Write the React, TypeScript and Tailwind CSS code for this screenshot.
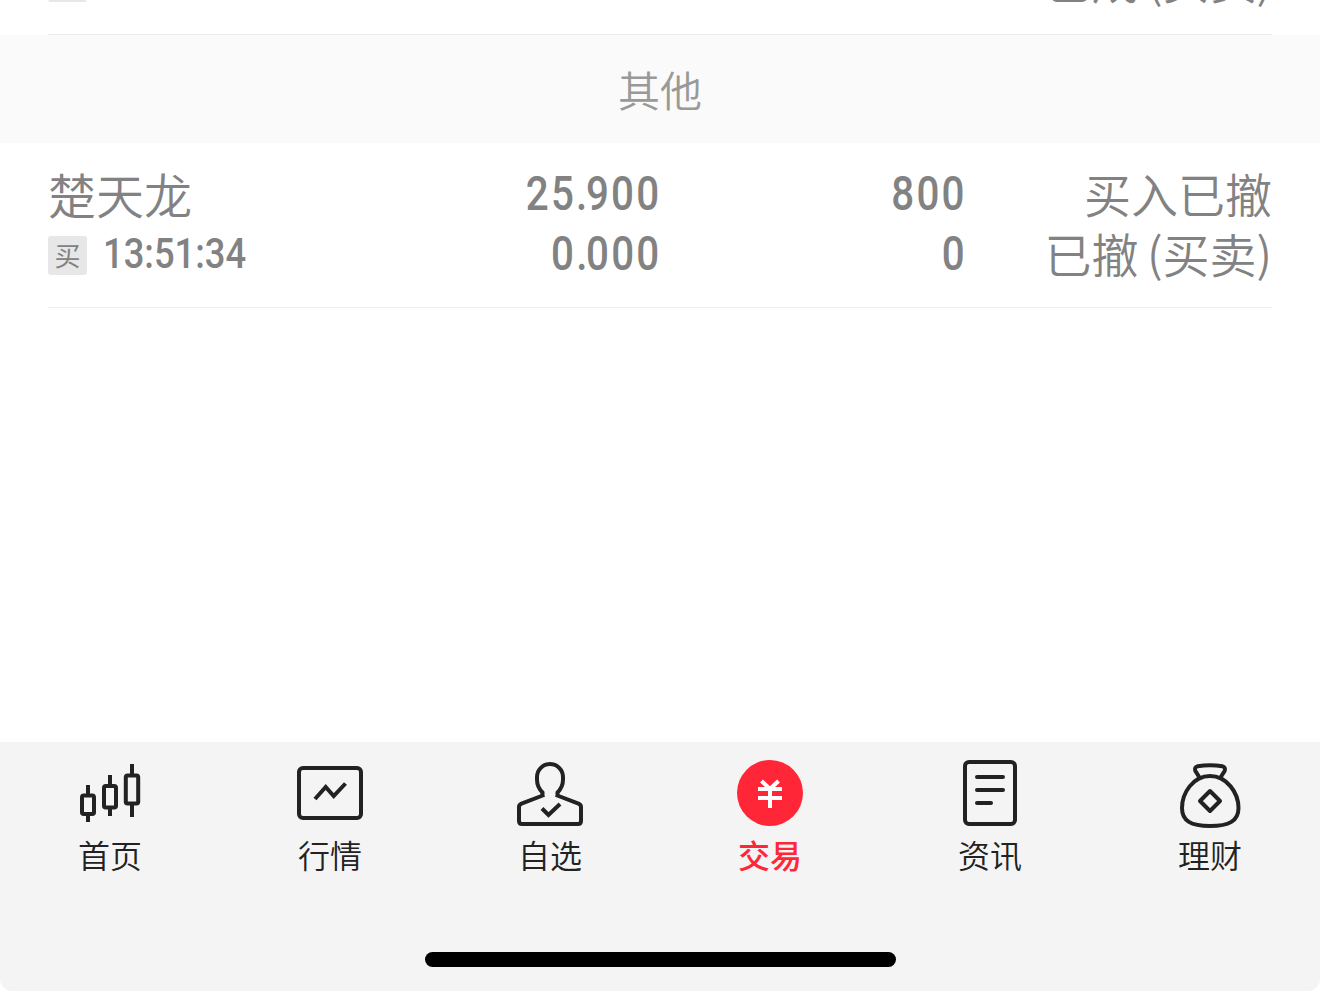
import type { ReactNode } from "react"

type Tab = {
  label: string
  icon: ReactNode
  active?: boolean
}

const tabs: Tab[] = [
  {
    label: "首页",
    icon: (
      <>
        <rect x="8" y="38.5" width="12" height="18.5" rx="1.8" />
        <path d="M14 28v10M14 58v7" />
        <rect x="30" y="29" width="12" height="21.5" rx="1.8" />
        <path d="M36 18v10M36 51v8" />
        <rect x="51.8" y="18.5" width="12.4" height="28" rx="1.8" />
        <path d="M58 7v11M58 47v13" />
      </>
    ),
  },
  {
    label: "行情",
    icon: (
      <>
        <rect x="5" y="11" width="62" height="50" rx="4" />
        <path d="M21 42L31.7 30L39.7 39L51.5 26.5" />
      </>
    ),
  },
  {
    label: "自选",
    icon: (
      <>
        <path d="M28.5 40V35.5C25 32 23 27.5 23 22.5V20A13 13 0 0 1 49 20V22.5C49 27.5 47 32 43.5 35.5V40" />
        <path d="M30 38L7.5 46.6Q5 47.6 5 50V64Q5 67 8 67H64Q67 67 67 64V50Q67 47.6 64.5 46.6L42 38" />
        <path d="M28 51.5L34.5 58L46 47" />
      </>
    ),
  },
  {
    label: "交易",
    active: true,
    icon: (
      <>
        <circle cx="36" cy="36" r="33" fill="#ff2737" stroke="none" />
        <path d="M24 32H48M24 41H48M36 51V32M27.5 24L36 32L44.5 24" stroke="#fff" />
      </>
    ),
  },
  {
    label: "资讯",
    icon: (
      <>
        <rect x="11" y="5" width="50" height="62" rx="4" />
        <path d="M23 20H49M23 33H49M23 46H37" strokeLinecap="round" />
      </>
    ),
  },
  {
    label: "理财",
    icon: (
      <>
        <path d="M36 19C19 19 8 36 8 51C8 64 17 69 36 69S64.5 64 64.5 51C64.5 36 53 19 36 19Z" />
        <path d="M25.5 20.5L21.3 13.8Q20 10.5 23.5 9.3Q36 7.2 48.5 9.3Q52 10.5 50.7 13.8L46.5 20.5" />
        <path d="M36 34L46 44L36 54L26 44Z" strokeLinejoin="round" />
      </>
    ),
  },
]

// narrow digits with a tight decimal point
function Num({ value }: { value: string }) {
  const [whole, frac] = value.split(".")
  return (
    <span className="inline-block origin-right translate-x-px scale-x-[0.84] font-[Roboto] text-[48px] font-medium tracking-[2.6px]">
      {whole}
      {frac && <span className="tracking-[-1.5px]">.</span>}
      {frac}
    </span>
  )
}

function Tag() {
  return (
    <span className="flex h-[39px] w-[39px] items-center justify-center rounded-[3px] bg-[#e7e7e7] text-[26px]">
      买
    </span>
  )
}

// brackets sit a little higher than the characters around them
function Status({ text }: { text: string }) {
  return (
    <span className="text-[47px] font-[350] whitespace-pre [word-spacing:-2px]">
      {text} <span className="relative -top-px">(</span>买卖<span className="relative -top-px">)</span>
    </span>
  )
}

export default function App() {
  return (
    <div className="flex h-[991px] w-[1320px] flex-col overflow-hidden bg-white font-['Noto_Sans_CJK_SC',sans-serif] text-[#828282]">
      {/* previous order, scrolled mostly out of view */}
      <div className="mx-12 flex h-[35px] items-end justify-between border-b border-[#ededed] pb-8">
        <Tag />
        <div className="-mb-[7px] h-[60px] leading-[60px]">
          <Status text="已成" />
        </div>
      </div>

      <div className="flex h-[108px] items-center justify-center bg-[#fafafa] pb-0.5 text-[42px] font-[350] text-[#999]">
        其他
      </div>

      <div className="mx-12 grid h-[165px] grid-cols-[306px_306px_306px_306px] grid-rows-[60px_60px] border-b border-[#ededed] pt-5 leading-[60px]">
        <div className="text-[48px] font-[350]">楚天龙</div>
        <div className="pt-px text-right"><Num value="25.900" /></div>
        <div className="pt-px text-right"><Num value="800" /></div>
        <div className="text-right text-[47px] font-[350]">买入已撤</div>

        <div className="flex items-center gap-4 pt-1">
          <Tag />
          <span className="-mt-0.5 origin-left scale-x-[0.865] font-[Roboto] text-[42px] font-medium">13:51:34</span>
        </div>
        <div className="pt-px text-right"><Num value="0.000" /></div>
        <div className="pt-px text-right"><Num value="0" /></div>
        <div className="text-right"><Status text="已撤" /></div>
      </div>

      <div className="flex-1" />

      <nav className="flex h-[249px] flex-col items-center rounded-b-xl bg-[#f4f4f4]">
        <div className="grid w-full grid-cols-6 pt-[15px]">
          {tabs.map((tab) => (
            <div
              key={tab.label}
              className={`flex flex-col items-center ${tab.active ? "font-medium text-[#ff2737]" : "font-[350] text-[#222]"}`}
            >
              <svg width="72" height="72" viewBox="0 0 72 72" fill="none" stroke="currentColor" strokeWidth="4">
                {tab.icon}
              </svg>
              <span className="mt-0.5 text-[32px] leading-[46px]">{tab.label}</span>
            </div>
          ))}
        </div>
        <div className="mt-[75px] h-[15px] w-[471px] rounded-full bg-black" />
      </nav>
    </div>
  )
}
